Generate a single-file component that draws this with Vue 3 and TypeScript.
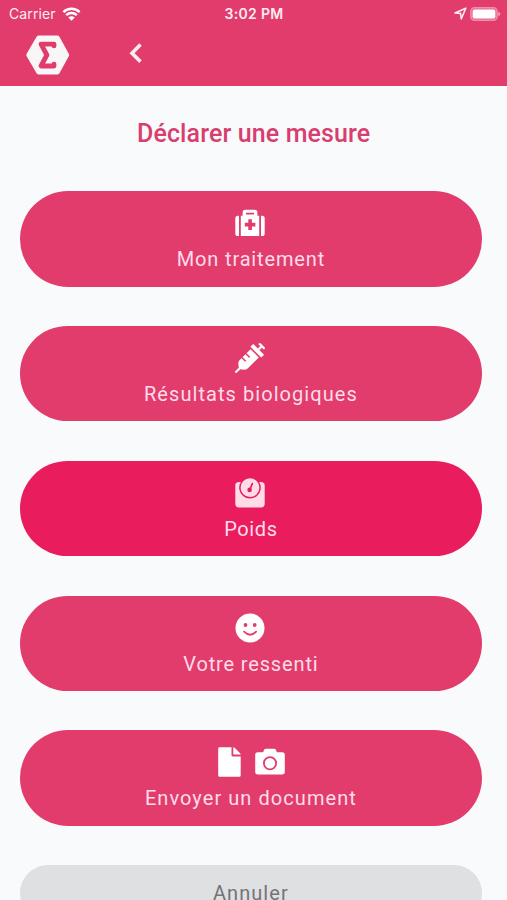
<script setup lang="ts">
type Action = { id: string; label: string; icons: string[]; active?: boolean }

const actions: Action[] = [
  { id: 'treatment', label: 'Mon traitement', icons: ['medkit'] },
  { id: 'biology', label: 'Résultats biologiques', icons: ['syringe'] },
  { id: 'weight', label: 'Poids', icons: ['scale'], active: true },
  { id: 'feeling', label: 'Votre ressenti', icons: ['smile'] },
  { id: 'document', label: 'Envoyer un document', icons: ['file', 'camera'] },
]
</script>

<template>
  <div class="screen">
    <header class="header">
      <div class="status">
        <div class="carrier">
          <span>Carrier</span>
          <svg class="wifi" width="19" height="14" viewBox="0 0 19 14">
            <path d="M1.4 5.1a11.6 11.6 0 0 1 16.2 0M4.2 8.1a7.6 7.6 0 0 1 10.6 0" fill="none" stroke="currentColor" stroke-width="2.4" />
            <path d="M6.3 10.5a4.6 4.6 0 0 1 6.4 0L9.5 13.8z" fill="currentColor" />
          </svg>
        </div>
        <span class="time">3:02 PM</span>
        <div class="indicators">
          <svg width="13" height="13" viewBox="0 0 13 13">
            <path d="M1 6 11.8 1.2 7.300 11.800 6.500 6.400z" fill="none" stroke="currentColor" stroke-width="1.600" stroke-linejoin="round" />
          </svg>
          <svg width="31" height="14" viewBox="0 0 31 14">
            <rect x=".8" y=".7" width="26.400" height="12.600" rx="3.800" fill="#e96e94" stroke="#f08fae" stroke-width="1.300" />
            <rect x="2.700" y="2.400" width="22.600" height="9.200" rx="2" fill="#fff" />
            <path d="M28.300 4.700q2 .7 2 2.300t-2 2.300z" fill="#f3a3bd" />
          </svg>
        </div>
      </div>
      <nav class="nav">
        <svg class="logo" width="44" height="40" viewBox="0 0 44 40">
          <path d="M13 3.200h18L40.300 20 31 36.800H13L3.200 20z" fill="#f8f6f7" stroke="#f8f6f7" stroke-width="5.600" stroke-linejoin="round" />
          <path d="M28 10.900V9.200H15L20.900 20 15 31h13v-1.800" fill="none" stroke="#e23c6d" stroke-width="4.800" stroke-linecap="round" stroke-linejoin="round" />
        </svg>
        <svg class="back" width="16" height="24" viewBox="0 0 16 24">
          <path d="M12.500 3.600 4 12.200l8.500 8.400" fill="none" stroke="#fcebf1" stroke-width="3.600" />
        </svg>
      </nav>
    </header>

    <main class="content">
      <h1 class="title">Déclarer une mesure</h1>

      <button v-for="action in actions" :key="action.id" type="button" class="action" :class="[action.id, { active: action.active }]">
        <span class="icons">
          <template v-for="icon in action.icons" :key="icon">
            <svg v-if="icon === 'medkit'" width="30" height="30" viewBox="0 0 30 30">
              <path d="M4 7.800v20.300H2.900Q.3 28.100.3 25.400V10.600Q.3 7.800 2.900 7.800zM26 7.800h1.100q2.600 0 2.600 2.800v14.800q0 2.700-2.600 2.700H26z" fill="currentColor" />
              <path fill-rule="evenodd" d="M5.800 28.100V7.800h1.800V4.500q0-2.800 2.800-2.800h9.200q2.800 0 2.800 2.800v3.300h1.800v20.300zM11 4.700v1.800h8V4.700zM13.300 11.300v3.500H9.800v3.600h3.500v3.500h3.600v-3.500h3.500v-3.600h-3.500v-3.500z" fill="currentColor" />
            </svg>
            <svg v-else-if="icon === 'syringe'" width="30" height="30" viewBox="0 0 512 512">
              <path d="M201.5 174.8l55.7 55.8c3.1 3.1 3.1 8.2 0 11.3l-11.3 11.3c-3.1 3.1-8.2 3.1-11.3 0l-55.7-55.8-45.3 45.3 55.8 55.8c3.1 3.1 3.1 8.2 0 11.3l-11.3 11.3c-3.1 3.1-8.2 3.1-11.3 0L111 265.2l-26.4 26.4c-17.3 17.3-25.6 41.1-23 65.4l7.1 63.6L2.3 487c-3.1 3.1-3.1 8.2 0 11.3l11.3 11.3c3.1 3.1 8.2 3.1 11.3 0l66.3-66.3 63.6 7.1c23.9 2.6 47.9-5.4 65.4-23l181.9-181.9-135.7-135.7-64.9 65zm308.2-93.3L430.5 2.3c-3.1-3.1-8.2-3.1-11.3 0l-11.3 11.3c-3.1 3.1-3.1 8.2 0 11.3l28.3 28.3-45.3 45.3-56.6-56.6-17-17c-3.1-3.1-8.2-3.1-11.3 0l-33.9 33.9c-3.1 3.1-3.1 8.2 0 11.3l17 17L424.8 223l17 17c3.1 3.1 8.2 3.1 11.3 0l33.9-34c3.1-3.1 3.1-8.2 0-11.3l-73.5-73.5 45.3-45.3 28.3 28.3c3.1 3.1 8.2 3.1 11.3 0l11.3-11.3c3.1-3.2 3.1-8.2 0-11.4z" fill="currentColor" stroke="currentColor" stroke-width="8" />
            </svg>
            <svg v-else-if="icon === 'scale'" width="30" height="30" viewBox="0 0 30 30">
              <path d="M4 4.100h1.800A10.800 10.800 0 1 0 24.200 4.100H26q3.700 0 3.700 3.700v18q0 3.700-3.700 3.700H4Q.3 29.500.3 25.800V7.800Q.3 4.100 4 4.100z" fill="currentColor" />
              <circle cx="15" cy="9.700" r="9.400" fill="currentColor" />
              <path d="M14.600 12.200 17.300 5.600" stroke="#e91d5d" stroke-width="1.700" stroke-linecap="round" />
              <circle cx="14.600" cy="11.900" r="2.300" fill="#e91d5d" />
            </svg>
            <svg v-else-if="icon === 'smile'" width="30" height="30" viewBox="0 0 30 30">
              <circle cx="15" cy="15" r="14.500" fill="currentColor" />
              <circle cx="10.500" cy="12" r="1.900" fill="#e23c6d" />
              <circle cx="19.700" cy="12" r="1.900" fill="#e23c6d" />
              <path d="M9.100 18.700q6 6 12 0" fill="none" stroke="#e23c6d" stroke-width="1.800" stroke-linecap="round" />
            </svg>
            <svg v-else-if="icon === 'file'" width="23" height="30" viewBox="0 0 23 30">
              <path d="M1.500.2h12v7.700q0 1.500 1.500 1.500h7.700v18.900q0 1.500-1.500 1.500H1.700Q.2 29.800.2 28.300V1.600Q.2.200 1.500.200z" fill="currentColor" />
              <path d="M15.300.200q.8.100 1.300.6l5.500 5.500q.6.600.6 1.300h-7.400z" fill="currentColor" />
            </svg>
            <svg v-else width="30" height="30" viewBox="0 0 30 30">
              <path d="M2.800 5.200h5.300l.9-2.300q.5-1.200 1.800-1.200h8.400q1.300 0 1.800 1.200l.9 2.300h5.300q2.600 0 2.600 2.600v17q0 2.600-2.600 2.600H2.800Q.2 27.400.2 24.800v-17q0-2.600 2.600-2.600z" fill="currentColor" />
              <circle cx="15" cy="16.200" r="6.100" fill="none" stroke="#e23c6d" stroke-width="1.800" />
            </svg>
          </template>
        </span>
        <span class="label">{{ action.label }}</span>
      </button>

      <button type="button" class="cancel"><span class="label">Annuler</span></button>
    </main>
  </div>
</template>

<style>
body {
  margin: 0;
  background: #f9fafc;
}
</style>

<style scoped>
.screen {
  box-sizing: border-box;
  width: 100%;
  height: 900px;
  overflow: hidden;
  background: #f9fafc;
  font-family: Roboto, "Liberation Sans", sans-serif;
}

svg {
  display: block;
  flex: none;
}

.header {
  height: 86px;
  background: #e23c6d;
  color: #fff;
}

.status {
  display: grid;
  grid-template-columns: 1fr auto 1fr;
  align-items: center;
  height: 27px;
  padding: 0 6px 0 9px;
  font-family: Inter, sans-serif;
  font-size: 14px;
  color: #fdecf2;
}

.carrier {
  display: flex;
  align-items: center;
  gap: 6px;
  letter-spacing: 0.1px;
}

.wifi {
  color: #fff;
}

.time {
  margin-right: 2px;
  font-weight: 600;
  letter-spacing: 0.350px;
}

.indicators {
  display: flex;
  align-items: center;
  justify-content: flex-end;
  gap: 3px;
}

.nav {
  display: flex;
  align-items: center;
  gap: 58px;
  padding: 8px 0 0 25.700px;
}

.back {
  margin-top: -4px;
}

.content {
  display: flex;
  flex-direction: column;
  gap: 39.300px;
  padding: 0 25px 0 20.300px;
}

.title {
  margin: 31px -5px -5.200px 0;
  height: 40px;
  line-height: 33px;
  font-size: 25px;
  font-weight: 500;
  text-align: center;
  color: #d83e6e;
  letter-spacing: 0.120px;
}

.action,
.cancel {
  flex: none;
  display: flex;
  flex-direction: column;
  align-items: center;
  margin: 0;
  border: 0;
  font-family: inherit;
  font-size: 20px;
}

.action {
  height: 95.500px;
  padding: 17px 1.500px 0 0;
  border-radius: 48px;
  background: #e23c6d;
  color: #fff;
}

.active {
  background: #e91d5d;
  color: #ffdce8;
}

.icons {
  display: flex;
  gap: 14px;
  height: 30px;
}

.document .icons {
  margin-left: 2px;
}

.label {
  margin: 9px -1px 0 0;
  line-height: 24px;
  letter-spacing: 1.060px;
  color: #ffdce8;
  white-space: nowrap;
}

.treatment .label,
.feeling .label {
  letter-spacing: 0.850px;
}

.weight .label {
  letter-spacing: 0.600px;
}

.cancel {
  height: 56px;
  border-radius: 28px;
  padding: 7px 1.500px 0 0;
  background: #dfe0e1;
}

.cancel .label {
  color: #737475;
}
</style>
